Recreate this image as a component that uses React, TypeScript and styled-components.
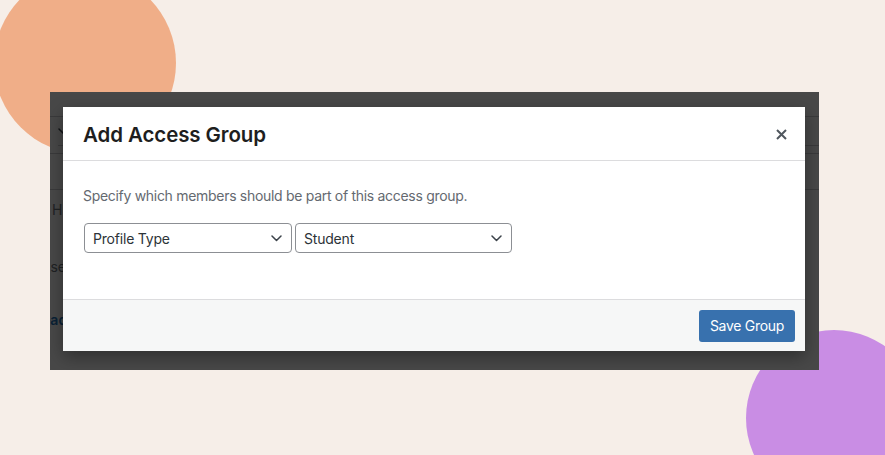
import React from 'react';
import styled, { createGlobalStyle } from 'styled-components';

const GlobalStyle = createGlobalStyle`
  html, body {
    margin: 0;
    padding: 0;
    background: #f6eee8;
    font-family: Inter, "Noto Sans", "Liberation Sans", sans-serif;
    overflow: hidden;
  }
  * {
    box-sizing: border-box;
  }
`;

const Stage = styled.div`
  position: relative;
  width: 885px;
  height: 455px;
  overflow: hidden;
  padding: 92px 0 0 50px;
`;

const Blob = styled.div<{ $color: string; $size: number; $left: number; $top: number }>`
  position: absolute;
  left: ${(p) => p.$left}px;
  top: ${(p) => p.$top}px;
  width: ${(p) => p.$size}px;
  height: ${(p) => p.$size}px;
  border-radius: 50%;
  background: ${(p) => p.$color};
`;

const Frame = styled.div`
  position: relative;
  width: 769px;
  height: 278px;
  overflow: hidden;
  background: #f0f0f1;
`;

/* the admin page that sits behind the dialog */
const AdminPage = styled.div`
  display: flex;
  flex-direction: column;
  color: #6a7077;
  font-size: 14px;
`;

const AdminRow = styled.div<{ $height: number; $line?: boolean; $shift?: number }>`
  height: ${(p) => p.$height}px;
  flex-shrink: 0;
  display: flex;
  align-items: center;
  margin-left: ${(p) => p.$shift ?? 0}px;
  border-bottom: ${(p) => (p.$line ? '1px solid #c3c4c7' : 'none')};
  white-space: nowrap;
`;

const AdminLink = styled.span`
  color: #2271b1;
  font-weight: 600;
`;

const Dim = styled.div`
  position: absolute;
  inset: 0;
  background: rgba(0, 0, 0, 0.7);
`;

const Modal = styled.div`
  position: absolute;
  top: 15px;
  left: 13px;
  right: 14px;
  bottom: 19px;
  display: flex;
  flex-direction: column;
  background: #fff;
  box-shadow: 0 6px 16px rgba(0, 0, 0, 0.35);
`;

const Header = styled.div`
  height: 54px;
  flex-shrink: 0;
  display: flex;
  align-items: center;
  justify-content: space-between;
  padding: 2px 20px 0 20px;
  border-bottom: 1px solid #dcdcde;
`;

const Title = styled.h1`
  margin: 0;
  font-size: 20.5px;
  font-weight: 600;
  color: #1e1e1e;
  letter-spacing: -0.1px;
`;

const CloseButton = styled.button`
  width: 20px;
  height: 20px;
  margin-right: -6px;
  padding: 0;
  border: none;
  background: transparent;
  color: #50575e;
  display: flex;
  align-items: center;
  justify-content: center;
  cursor: pointer;
`;

const Body = styled.div`
  flex: 1;
  padding: 25px 20px 0 20px;
`;

const Lead = styled.p`
  margin: 0 0 17px;
  font-size: 14px;
  line-height: 20px;
  letter-spacing: -0.3px;
  color: #646970;
`;

const Fields = styled.div`
  display: flex;
  gap: 3px;
  padding-left: 1px;
`;

const SelectBox = styled.div<{ $width: number }>`
  width: ${(p) => p.$width}px;
  height: 30px;
  display: flex;
  align-items: center;
  justify-content: space-between;
  padding: 0 9px 0 8px;
  border: 1px solid #8c8f94;
  border-radius: 4px;
  background: #fff;
  color: #2c3338;
  font-size: 14px;
  letter-spacing: -0.2px;
  cursor: pointer;
`;

const Footer = styled.div`
  height: 52px;
  flex-shrink: 0;
  display: flex;
  align-items: center;
  justify-content: flex-end;
  padding: 0 10px;
  border-top: 1px solid #dcdcde;
  background: #f6f7f7;
`;

const PrimaryButton = styled.button`
  height: 32px;
  padding: 0 11px;
  border: none;
  border-radius: 3px;
  background: #3871ae;
  color: #fff;
  font-family: inherit;
  font-size: 14px;
  letter-spacing: -0.3px;
  cursor: pointer;
`;

const Chevron = () => (
  <svg width="11" height="7" viewBox="0 0 11 7" fill="none">
    <path d="M1 1l4.5 4.5L10 1" stroke="#3c434a" strokeWidth="1.5" strokeLinecap="round" strokeLinejoin="round" />
  </svg>
);

const Select: React.FC<{ value: string; width: number }> = ({ value, width }) => (
  <SelectBox $width={width} role="combobox">
    <span>{value}</span>
    <Chevron />
  </SelectBox>
);

export default function App() {
  return (
    <>
      <GlobalStyle />
      <Stage>
        <Blob $color="#f0ae88" $size={182} $left={-6} $top={-28} />
        <Blob $color="#c98de4" $size={176} $left={746} $top={330} />
        <Frame>
          <AdminPage>
            <AdminRow $height={25} $line />
            <AdminRow $height={29} $line $shift={8}>
              <Chevron />
            </AdminRow>
            <AdminRow $height={8} $line />
            <AdminRow $height={36} $line />
            <AdminRow $height={38} $shift={2}>Hi</AdminRow>
            <AdminRow $height={19} />
            <AdminRow $height={38} $shift={-10}>Uses</AdminRow>
            <AdminRow $height={15} />
            <AdminRow $height={38} $shift={-17}>
              <AdminLink>Read</AdminLink>
            </AdminRow>
          </AdminPage>
          <Dim />
          <Modal role="dialog">
            <Header>
              <Title>Add Access Group</Title>
              <CloseButton aria-label="Close">
                <svg width="11" height="11" viewBox="0 0 11 11">
                  <path d="M1 1l9 9M10 1l-9 9" stroke="currentColor" strokeWidth="2" />
                </svg>
              </CloseButton>
            </Header>
            <Body>
              <Lead>Specify which members should be part of this access group.</Lead>
              <Fields>
                <Select value="Profile Type" width={208} />
                <Select value="Student" width={217} />
              </Fields>
            </Body>
            <Footer>
              <PrimaryButton>Save Group</PrimaryButton>
            </Footer>
          </Modal>
        </Frame>
      </Stage>
    </>
  );
}
